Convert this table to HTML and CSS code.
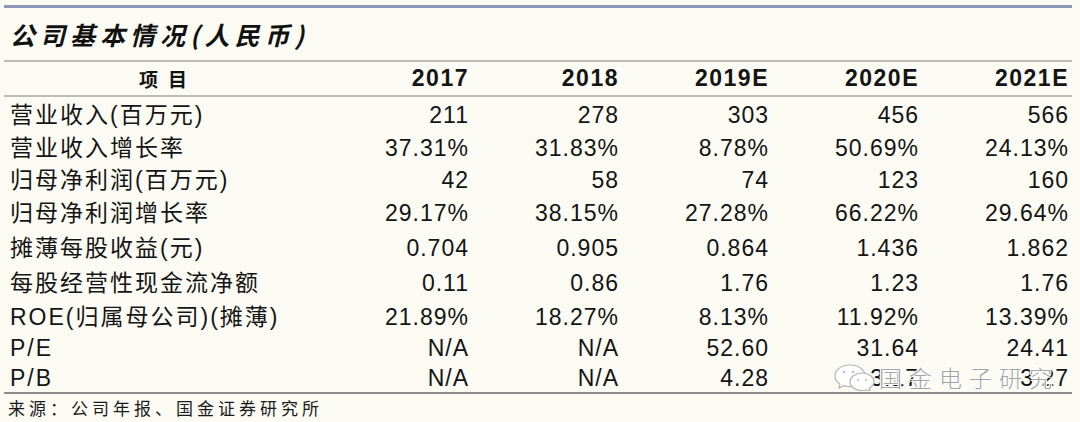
FILE: index.html
```html
<!DOCTYPE html>
<html lang="zh-CN">
<head>
<meta charset="utf-8">
<title>公司基本情况</title>
<link rel="stylesheet" href="styles.css">
</head>
<body>
<div class="wrap">
  <div class="topline"></div>
  <h1 class="title">公司基本情况(人民币)</h1>
  <div class="table-box">
    <table class="fin">
      <colgroup>
        <col class="c-label"><col class="c-num"><col class="c-num"><col class="c-num"><col class="c-num"><col class="c-num">
      </colgroup>
      <thead>
        <tr>
          <th class="label-h">项目</th>
          <th>2017</th><th>2018</th><th>2019E</th><th>2020E</th><th>2021E</th>
        </tr>
      </thead>
      <tbody>
        <tr><td class="label">营业收入(百万元)</td><td>211</td><td>278</td><td>303</td><td>456</td><td>566</td></tr>
        <tr><td class="label">营业收入增长率</td><td>37.31%</td><td>31.83%</td><td>8.78%</td><td>50.69%</td><td>24.13%</td></tr>
        <tr><td class="label">归母净利润(百万元)</td><td>42</td><td>58</td><td>74</td><td>123</td><td>160</td></tr>
        <tr><td class="label">归母净利润增长率</td><td>29.17%</td><td>38.15%</td><td>27.28%</td><td>66.22%</td><td>29.64%</td></tr>
        <tr><td class="label">摊薄每股收益(元)</td><td>0.704</td><td>0.905</td><td>0.864</td><td>1.436</td><td>1.862</td></tr>
        <tr><td class="label">每股经营性现金流净额</td><td>0.11</td><td>0.86</td><td>1.76</td><td>1.23</td><td>1.76</td></tr>
        <tr><td class="label">ROE(归属母公司)(摊薄)</td><td>21.89%</td><td>18.27%</td><td>8.13%</td><td>11.92%</td><td>13.39%</td></tr>
        <tr><td class="label">P/E</td><td>N/A</td><td>N/A</td><td>52.60</td><td>31.64</td><td>24.41</td></tr>
        <tr><td class="label">P/B</td><td>N/A</td><td>N/A</td><td>4.28</td><td>3.17</td><td>3.27</td></tr>
      </tbody>
    </table>
    <div class="watermark">
      <svg class="wx" width="44" height="28" viewBox="0 0 44 28">
        <path d="M17 2 C8 2 2 7 2 13 C2 16.5 4 19.3 7 21 L6 25 L10.5 22.6 C12.5 23.3 14.7 23.6 17 23.6 C26 23.6 32 18.6 32 12.8 C32 7 26 2 17 2 Z" fill="#fff" stroke="#b4b4b4" stroke-width="1.2"/>
        <path d="M29 10 C22 10 17 14.2 17 19 C17 23.8 22 27.6 29 27.6 C30.6 27.6 32 27.4 33.4 27 L37 28 L36.2 25 C39 23.4 41 21.3 41 19 C41 14.2 36 10 29 10 Z" fill="#fff" stroke="#b4b4b4" stroke-width="1.2"/>
        <circle cx="11" cy="9" r="1.3" fill="#bdbdbd"/>
        <circle cx="20" cy="9" r="1.3" fill="#bdbdbd"/>
        <circle cx="25" cy="17" r="1.1" fill="#bdbdbd"/>
        <circle cx="33" cy="17" r="1.1" fill="#bdbdbd"/>
      </svg>
      <span class="wm-text">国金电子研究</span>
    </div>
  </div>
  <p class="source">来源：公司年报、国金证券研究所</p>
</div>
</body>
</html>
```

FILE: styles.css
```css
html, body {
  margin: 0;
  padding: 0;
  background: #fcfbf3;
}

body {
  width: 1080px;
  height: 422px;
  overflow: hidden;
  font-family: "Liberation Sans", "Noto Sans CJK SC", sans-serif;
  color: #141414;
}

.wrap {
  width: 1068px;
  padding-left: 4px;
}

.topline {
  margin-top: 5px;
  height: 3px;
  background: #8a96b6;
}

.title {
  margin: 0;
  height: 52px;
  display: flex;
  align-items: center;
  padding-left: 6px;
  font-family: "Noto Sans CJK SC", sans-serif;
  font-size: 25px;
  font-weight: 700;
  font-style: italic;
  letter-spacing: 5px;
  color: #111;
  border-bottom: 2px solid #bcbcb4;
}

.table-box {
  position: relative;
}

.fin {
  width: 1068px;
  border-collapse: collapse;
  table-layout: fixed;
  font-size: 23px;
  letter-spacing: 1px;
}

.c-label { width: 318px; }
.c-num { width: 150px; }

.fin th,
.fin td {
  padding: 2px 3px 0 0;
  text-align: right;
  white-space: nowrap;
  line-height: 1;
}

.fin thead tr {
  height: 34px;
  border-bottom: 2px solid #bcbcb4;
}

.fin th {
  font-weight: 700;
  letter-spacing: 1.5px;
  padding-top: 0;
}

.fin th.label-h {
  text-align: center;
  font-family: "Noto Sans CJK SC", sans-serif;
  font-size: 19px;
  letter-spacing: 10px;
  padding: 0 0 0 10px;
}

.fin td.label {
  text-align: left;
  padding-left: 6px;
  letter-spacing: 2px;
}

.fin tbody tr { height: 33px; }
.fin tbody tr:nth-child(1) { height: 35px; }
.fin tbody tr:nth-child(2) { height: 33px; }
.fin tbody tr:nth-child(3) { height: 31px; }
.fin tbody tr:nth-child(4) { height: 35px; }
.fin tbody tr:nth-child(5) { height: 35px; }
.fin tbody tr:nth-child(6) { height: 35px; }
.fin tbody tr:nth-child(7) { height: 32px; }
.fin tbody tr:nth-child(8) { height: 30px; }
.fin tbody tr:nth-child(9) {
  height: 31px;
  border-bottom: 2px solid #8c8c88;
}

.watermark {
  position: absolute;
  left: 829px;
  top: 298px;
  display: flex;
  align-items: center;
  gap: 2px;
}

.wm-text {
  font-family: "Noto Sans CJK SC", sans-serif;
  font-size: 23px;
  font-weight: 300;
  letter-spacing: 7px;
  color: #a4a4a4;
  text-shadow: 1px 1px 0 #fff, -1px -1px 0 #fff, 1px -1px 0 #fff, -1px 1px 0 #fff;
}

.source {
  margin: 0;
  height: 26px;
  display: flex;
  align-items: center;
  padding-left: 4px;
  font-family: "Noto Sans CJK SC", sans-serif;
  font-size: 17px;
  letter-spacing: 4px;
  color: #1a1a1a;
}
```
